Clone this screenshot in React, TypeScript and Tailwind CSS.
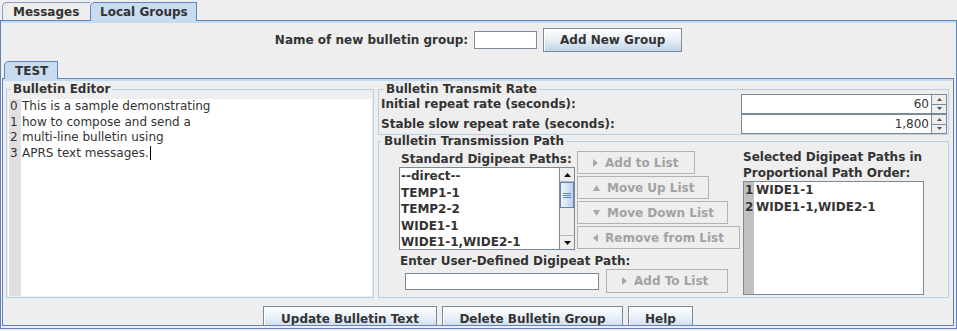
import React from "react";

type Dir = "up" | "down" | "left" | "right";

function Tri({ dir, color, w, h }: { dir: Dir; color: string; w: number; h: number }) {
    const pts =
        dir === "up"
            ? `0,${h} ${w / 2},0 ${w},${h}`
            : dir === "down"
            ? `0,0 ${w},0 ${w / 2},${h}`
            : dir === "right"
            ? `0,0 ${w},${h / 2} 0,${h}`
            : `${w},0 0,${h / 2} ${w},${h}`;
    return (
        <svg width={w} height={h} viewBox={`0 0 ${w} ${h}`} className="shrink-0">
            <polygon points={pts} fill={color} />
        </svg>
    );
}

function Btn({ className, children }: { className: string; children: React.ReactNode }) {
    return (
        <div
            className={`flex shrink-0 items-center justify-center border border-[#7a8a99] bg-linear-to-b from-white via-[#e6eef7] to-[#bfd3e8] font-bold shadow-[inset_1px_1px_0_#ffffff] ${className}`}
        >
            {children}
        </div>
    );
}

function OffBtn({ className, dir, label }: { className: string; dir: Dir; label: string }) {
    const vertical = dir === "up" || dir === "down";
    return (
        <div
            className={`flex shrink-0 items-center gap-[7px] border border-[#b2b2b2] bg-[#eeeeee] pl-[15px] font-bold text-[#a2a2a2] ${className}`}
        >
            <Tri dir={dir} color="#a8a8a8" w={vertical ? 7 : 5} h={vertical ? 6 : 8} />
            <span className="whitespace-nowrap">{label}</span>
        </div>
    );
}

function Spinner({ value }: { value: string }) {
    return (
        <div className="flex h-[20px]">
            <div className="flex w-[191px] items-center justify-end border border-[#7a8a99] bg-white pr-[2px]">
                {value}
            </div>
            <div className="flex w-[15px] flex-col border border-l-0 border-[#7a8a99] bg-[#eeeeee]">
                <div className="flex flex-1 items-center justify-center border-b border-[#7a8a99]">
                    <Tri dir="up" color="#555555" w={5} h={3} />
                </div>
                <div className="flex flex-1 items-center justify-center">
                    <Tri dir="down" color="#555555" w={5} h={3} />
                </div>
            </div>
        </div>
    );
}

const editorLines = [
    "This is a sample demonstrating",
    "how to compose and send a",
    "multi-line bulletin using",
    "APRS text messages.",
];

const standardPaths = ["--direct--", "TEMP1-1", "TEMP2-2", "WIDE1-1", "WIDE1-1,WIDE2-1"];
const selectedPaths = ["WIDE1-1", "WIDE1-1,WIDE2-1"];

export default function App() {
    return (
        <div className="h-[331px] w-[957px] overflow-hidden bg-[#eeeeee] font-['DejaVu_Sans',sans-serif] text-[12px] leading-[14px] text-[#333333]">
            {/* Pestañas principales */}
            <div className="flex h-[20px] items-end pl-[2px]">
                <div className="flex h-[18px] w-[88px] items-center rounded-tl-[5px] border border-r-0 border-b-0 border-[#8b9dbb] pl-[10px] font-bold">
                    Messages
                </div>
                <div className="relative z-10 -mb-[1px] flex h-[19px] w-[107px] items-center rounded-tl-[5px] border border-b-0 border-[#6382bf] bg-[#c8dcf0] pl-[9px] font-bold">
                    Local Groups
                </div>
            </div>

            <div className="flex h-[309px] flex-col border border-[#6382bf]">
                <div className="h-[2px] shrink-0 bg-[#c8dcf0]" />

                {/* Nuevo grupo */}
                <div className="mt-[5px] flex h-[24px] shrink-0 items-center justify-center gap-[6px]">
                    <span className="whitespace-nowrap font-bold">Name of new bulletin group:</span>
                    <div className="h-[18px] w-[63px] border border-[#7a8a99] bg-white" />
                    <Btn className="h-[24px] w-[139px]">Add New Group</Btn>
                </div>

                {/* Pestaña TEST */}
                <div className="mt-[8px] flex h-[18px] shrink-0 items-end pl-[3px]">
                    <div className="relative z-10 -mb-[1px] flex h-[18px] w-[54px] items-center rounded-tl-[5px] border border-b-0 border-[#6382bf] bg-[#c8dcf0] pl-[10px] font-bold">
                        TEST
                    </div>
                </div>

                <div className="ml-[1px] mr-[2px] flex h-[248px] shrink-0 flex-col overflow-hidden border border-[#6382bf]">
                    <div className="h-[2px] shrink-0 bg-[#c8dcf0]" />

                    <div className="mt-[2px] flex h-[215px] shrink-0 pl-[3px]">
                        {/* Editor */}
                        <fieldset className="flex h-[215px] w-[368px] min-w-0 flex-col border border-[#b8cfe5] px-[1px] pb-[1px]">
                            <legend className="ml-[3px] px-[2px] font-bold leading-[12px]">Bulletin Editor</legend>
                            <div className="mt-[4px] flex flex-1 bg-white pl-[1px]">
                                <div className="w-[12px] bg-[#e0e0e0] pl-[1px] leading-[15.5px]">
                                    {editorLines.map((_, i) => (
                                        <div key={i}>{i}</div>
                                    ))}
                                </div>
                                <div className="pl-[1px] leading-[15.5px]">
                                    {editorLines.map((l, i) => (
                                        <div key={i} className="whitespace-nowrap">
                                            {l}
                                            {i === editorLines.length - 1 && (
                                                <span className="ml-[1px] inline-block h-[14px] w-[1px] bg-black align-middle" />
                                            )}
                                        </div>
                                    ))}
                                </div>
                            </div>
                        </fieldset>

                        <div className="ml-[4px] flex w-[571px] flex-col">
                            {/* Tasa */}
                            <fieldset className="min-w-0 border border-[#b8cfe5] pl-[2px] pr-[1px]">
                                <legend className="ml-[3px] px-[2px] font-bold leading-[12px]">Bulletin Transmit Rate</legend>
                                <div className="-mt-[1px] flex h-[20px] items-center justify-between">
                                    <span className="font-bold">Initial repeat rate (seconds):</span>
                                    <Spinner value="60" />
                                </div>
                                <div className="flex h-[20px] items-center justify-between">
                                    <span className="font-bold">Stable slow repeat rate (seconds):</span>
                                    <Spinner value="1,800" />
                                </div>
                            </fieldset>

                            {/* Ruta */}
                            <fieldset className="min-w-0 flex-1 border border-[#b8cfe5]">
                                <legend className="ml-[3px] px-[2px] font-bold leading-[12px]">Bulletin Transmission Path</legend>
                                <div className="flex pl-[20px]">
                                    <div className="mt-[4px] flex w-[341px] flex-col">
                                        <div className="flex items-start">
                                            <div className="flex w-[176px] flex-col">
                                                <div className="h-[16px] whitespace-nowrap pl-[2px] font-bold leading-[16px]">
                                                    Standard Digipeat Paths:
                                                </div>
                                                <div className="flex h-[83px] border border-[#7a8a99] bg-white">
                                                    <div className="flex-1 pl-[1px] font-bold leading-[16.5px]">
                                                        {standardPaths.map((p) => (
                                                            <div key={p} className="whitespace-nowrap">{p}</div>
                                                        ))}
                                                    </div>
                                                    <div className="flex w-[15px] flex-col border-l border-[#7a8a99] bg-[#eeeeee]">
                                                        <div className="flex h-[14px] items-center justify-center border-b border-[#b8b8b8]">
                                                            <Tri dir="up" color="#111111" w={7} h={4} />
                                                        </div>
                                                        <div className="flex h-[26px] flex-col items-center justify-center gap-[1px] border border-[#6382bf] bg-linear-to-r from-[#eef4fa] to-[#bcd2e8]">
                                                            <div className="h-[1px] w-[8px] bg-[#6382bf]" />
                                                            <div className="h-[1px] w-[8px] bg-[#6382bf]" />
                                                            <div className="h-[1px] w-[8px] bg-[#6382bf]" />
                                                        </div>
                                                        <div className="flex-1" />
                                                        <div className="flex h-[14px] items-center justify-center border-t border-[#b8b8b8]">
                                                            <Tri dir="down" color="#111111" w={7} h={4} />
                                                        </div>
                                                    </div>
                                                </div>
                                            </div>
                                            <div className="ml-[2px] flex flex-col items-start gap-[2px]">
                                                <OffBtn className="h-[23px] w-[118px]" dir="right" label="Add to List" />
                                                <OffBtn className="h-[23px] w-[132px]" dir="up" label="Move Up List" />
                                                <OffBtn className="h-[23px] w-[151px]" dir="down" label="Move Down List" />
                                                <OffBtn className="h-[23px] w-[163px]" dir="left" label="Remove from List" />
                                            </div>
                                        </div>
                                        <div className="mt-[3px] h-[16px] whitespace-nowrap pl-[1px] font-bold leading-[16px]">
                                            Enter User-Defined Digipeat Path:
                                        </div>
                                        <div className="flex h-[24px] items-center pl-[6px]">
                                            <div className="h-[17px] w-[194px] border border-[#7a8a99] bg-white" />
                                            <OffBtn className="ml-[7px] h-[24px] w-[122px]" dir="right" label="Add To List" />
                                        </div>
                                    </div>

                                    <div className="ml-[3px] mt-[2px] flex w-[181px] flex-col">
                                        <div className="whitespace-nowrap font-bold leading-[16px]">Selected Digipeat Paths in</div>
                                        <div className="whitespace-nowrap font-bold leading-[16px]">Proportional Path Order:</div>
                                        <div className="flex h-[114px] border border-[#7a8a99] bg-white">
                                            <div className="w-[10px] bg-[#c0c0c0] pl-[1px] font-bold leading-[16.5px]">
                                                {selectedPaths.map((_, i) => (
                                                    <div key={i}>{i + 1}</div>
                                                ))}
                                            </div>
                                            <div className="pl-[2px] font-bold leading-[16.5px]">
                                                {selectedPaths.map((p) => (
                                                    <div key={p} className="whitespace-nowrap">{p}</div>
                                                ))}
                                            </div>
                                        </div>
                                    </div>
                                </div>
                            </fieldset>
                        </div>
                    </div>

                    {/* Botones inferiores */}
                    <div className="mt-[8px] flex shrink-0 justify-center gap-[5px]">
                        <Btn className="h-[25px] w-[174px]">Update Bulletin Text</Btn>
                        <Btn className="h-[25px] w-[181px]">Delete Bulletin Group</Btn>
                        <Btn className="h-[25px] w-[65px]">Help</Btn>
                    </div>
                </div>
            </div>
        </div>
    );
}
